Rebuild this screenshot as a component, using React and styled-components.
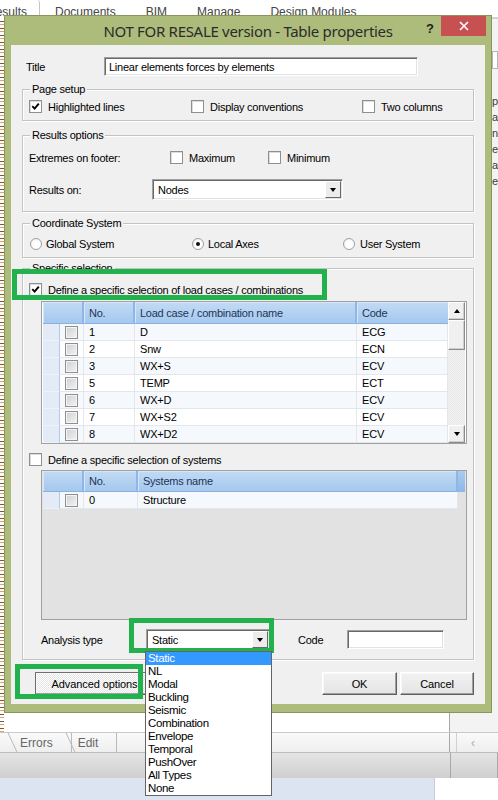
import React from 'react';
import styled, { createGlobalStyle, css } from 'styled-components';

const UI = '"Liberation Sans", Arial, sans-serif';
const SEGOE = '"Noto Sans", "Open Sans", sans-serif';

const GlobalStyle = createGlobalStyle`
  html, body { margin: 0; padding: 0; background: #fff; }
  body { font-family: ${UI}; font-size: 11px; color: #000; }
  * { box-sizing: border-box; }
`;

const Screen = styled.div`
  position: relative;
  width: 498px;
  height: 800px;
  overflow: hidden;
  background: #fff;
  display: flex;
  flex-direction: column;
`;

/* ---------- background application ---------- */

const RibbonTabs = styled.div`
  height: 18px;
  flex: none;
  display: flex;
  align-items: flex-start;
  font-family: ${UI};
  font-size: 12px;
  color: #444;
  border-bottom: 1px solid #d4d4d4;
`;

const RibbonTab = styled.div`
  padding: 5px 15px 0;
  height: 18px;
  white-space: nowrap;
  ${p => p.$active && css`
    margin-left: -13px;
    padding: 5px 12px 0 0;
    border-right: 1px solid #c6c6c6;
    border-top-right-radius: 3px;
    background: #fff;
  `}
`;

const Workspace = styled.div`
  height: 714px;
  flex: none;
  display: flex;
`;

const SideStrip = styled.div`
  width: 4px;
  flex: none;
  background: repeating-linear-gradient(180deg, #fff 0 3px, #7b5a3a 3px 4px, #fff 4px 6px, #e8a060 6px 7px);
`;

const MainPane = styled.div`
  flex: 1;
  background: #fff;
  border-right: 1px solid #a8a8a8;
`;

const RightPane = styled.div`
  width: 48px;
  flex: none;
  background: #f3f3f3;
  padding: 18px 0 0 42px;
  display: flex;
  flex-direction: column;
  gap: 4px;
  white-space: nowrap;
  color: #3a3a3a;
  border-top: 1px solid #d0d0d0;
`;

const PaneBox = styled.div`
  height: 18px;
  margin: 14px 0 22px;
  background: #fff;
  border: 1px solid #b5b5b5;
`;

const SheetTabs = styled.div`
  height: 20px;
  flex: none;
  display: flex;
  border-top: 1px solid #c9c9c9;
  background: linear-gradient(#fafafa, #eeeeee);
`;

const SheetTabArea = styled.div`
  width: 450px;
  display: flex;
  padding-left: 14px;
  border-right: 1px solid #a8a8a8;
`;

const SheetTab = styled.div`
  position: relative;
  height: 19px;
  padding: 3px 18px 0 6px;
  font-family: ${UI};
  font-size: 12px;
  color: #666;
  border-right: 1px solid #b9b9b9;
  &::before {
    content: '';
    position: absolute;
    left: -2px;
    top: 0;
    bottom: 0;
    border-left: 1px solid #b9b9b9;
    transform: skewX(25deg);
  }
`;

const ScrollStub = styled.div`
  flex: 1;
  display: flex;
  align-items: center;
  padding-left: 14px;
  color: #aaa;
  font-size: 12px;
  border-left: 1px solid #d0d0d0;
  margin-left: 6px;
`;

const StatusBar = styled.div`
  height: 26px;
  flex: none;
  background: linear-gradient(#e4e4e4, #cfcfcf);
  border-top: 1px solid #bdbdbd;
  display: flex;
`;

const StatusCell = styled.div`
  width: ${p => p.$w ? `${p.$w}px` : 'auto'};
  flex: ${p => p.$w ? 'none' : 1};
  border-right: 1px solid #a9a9a9;
`;

const BottomStrip = styled.div`
  flex: 1;
  display: flex;
`;

const BottomBlue = styled.div`
  width: 435px;
  background: #dbe4f0;
  border-right: 1px solid #c5cfdc;
`;

/* ---------- dialog window ---------- */

const Dialog = styled.div`
  position: absolute;
  left: 4px;
  top: 15px;
  width: 488px;
  height: 698px;
  background: #adbb7b;
  border: 1px solid #87955f;
  padding: 0 6px 8px;
  display: flex;
  flex-direction: column;
`;

const TitleBar = styled.div`
  height: 29px;
  flex: none;
  display: flex;
  align-items: flex-start;
  position: relative;
`;

const TitleText = styled.div`
  flex: 1;
  text-align: center;
  font-family: ${SEGOE};
  font-size: 15px;
  letter-spacing: -0.3px;
  color: #2b2b2b;
  padding-top: 5px;
`;

const HelpGlyph = styled.div`
  position: absolute;
  right: 51px;
  top: 5px;
  font-family: ${UI};
  font-weight: bold;
  font-size: 13px;
  color: #222;
`;

const CloseButton = styled.div`
  position: absolute;
  right: -1px;
  top: 0;
  width: 45px;
  height: 20px;
  background: #c75050;
  display: flex;
  align-items: center;
  justify-content: center;
`;

const Client = styled.div`
  flex: 1;
  background: #f0f0f0;
  padding: 12px 11px 0;
  display: flex;
  flex-direction: column;
`;

const Row = styled.div`
  display: flex;
  align-items: center;
  height: ${p => p.$h || 13}px;
  margin-top: ${p => p.$mt || 0}px;
  margin-left: ${p => p.$ml || 0}px;
`;

const Label = styled.span`
  width: ${p => p.$w ? `${p.$w}px` : 'auto'};
  flex: none;
  margin-left: ${p => p.$ml || 0}px;
  white-space: nowrap;
  letter-spacing: -0.25px;
`;

const TextInput = styled.div`
  width: ${p => p.$w}px;
  height: ${p => p.$h || 19}px;
  flex: none;
  background: #fff;
  border: 1px solid;
  border-color: #a0a0a0 #fff #fff #a0a0a0;
  box-shadow: inset 1px 1px 0 #696969, inset -1px -1px 0 #e3e3e3;
  padding: 2px 4px 0;
  line-height: 14px;
  letter-spacing: -0.25px;
  white-space: nowrap;
  overflow: hidden;
`;

const Group = styled.div`
  position: relative;
  margin-top: ${p => p.$mt}px;
  padding: ${p => p.$pad};
  border: 1px solid #c3c3c3;
  box-shadow: inset 1px 1px 0 #fff, 1px 1px 0 #fff;
`;

const Legend = styled.span`
  position: absolute;
  top: -7px;
  left: 7px;
  padding: 0 2px;
  background: #f0f0f0;
  letter-spacing: -0.25px;
  line-height: 13px;
`;

const OptionGrid = styled.div`
  display: grid;
  grid-template-columns: ${p => p.$cols};
  align-items: center;
  height: 13px;
`;

const Option = styled.div`
  display: flex;
  align-items: center;
  gap: ${p => p.$gap || 6}px;
  white-space: nowrap;
  letter-spacing: -0.25px;
`;

const CheckBox = styled.span`
  width: 13px;
  height: 13px;
  flex: none;
  background: #fff;
  border: 1px solid #8e8f8f;
  box-shadow: inset 1px 1px 0 #dcdcdc;
  display: inline-flex;
  align-items: center;
  justify-content: center;
`;

const GridCheck = styled.span`
  width: 13px;
  height: 13px;
  background: linear-gradient(135deg, #cfcfcf, #f4f4f4);
  border: 1px solid #8f8f8f;
  box-shadow: inset 0 0 0 1px #f4f4f4;
`;

const Radio = styled.span`
  width: 12px;
  height: 12px;
  flex: none;
  border-radius: 50%;
  background: radial-gradient(circle at 60% 60%, #fff 40%, #e6e6e6);
  border: 1px solid #a0a0a0;
  display: inline-flex;
  align-items: center;
  justify-content: center;
  &::after {
    content: '';
    width: 4px;
    height: 4px;
    border-radius: 50%;
    background: ${p => p.$on ? '#111' : 'transparent'};
  }
`;

const ComboBox = styled.div`
  width: ${p => p.$w}px;
  height: ${p => p.$h}px;
  flex: none;
  display: flex;
  align-items: center;
  background: #fff;
  border: 1px solid;
  border-color: #a0a0a0 #fff #fff #a0a0a0;
  box-shadow: inset 1px 1px 0 #696969, inset -1px -1px 0 #e3e3e3;
  padding: 0 1px 0 5px;
  letter-spacing: -0.25px;
`;

const ComboButton = styled.span`
  margin-left: auto;
  width: 16px;
  height: calc(100% - 2px);
  background: #ececec;
  border: 1px solid;
  border-color: #fff #696969 #696969 #fff;
  display: flex;
  align-items: center;
  justify-content: center;
`;

const Arrow = styled.span`
  width: 0;
  height: 0;
  border-left: 3.5px solid transparent;
  border-right: 3.5px solid transparent;
  ${p => p.$up
    ? css`border-bottom: 4px solid #000;`
    : css`border-top: 4px solid #000;`}
`;

/* ---------- grid tables ---------- */

const TableFrame = styled.div`
  width: 426px;
  height: ${p => p.$h}px;
  margin: ${p => p.$mt}px 0 0 12px;
  border: 1px solid #a0a0a0;
  padding: 0 1px;
  display: flex;
  background: ${p => p.$empty ? '#e2e2e2' : '#fff'};
  overflow: hidden;
`;

const TableBody = styled.div`
  flex: 1;
  display: flex;
  flex-direction: column;
  overflow: hidden;
`;

const GridRow = styled.div`
  display: grid;
  grid-template-columns: ${p => p.$cols};
  height: ${p => p.$h || 17}px;
  flex: none;
`;

const HeadCell = styled.div`
  grid-column: ${p => p.$span ? `span ${p.$span}` : 'auto'};
  display: flex;
  align-items: center;
  padding-left: 5px;
  color: #1d3557;
  letter-spacing: -0.25px;
  background: linear-gradient(#c2dbf4, #a5c8ee);
  border-right: 2px solid #8fb6e6;
  border-bottom: 1px solid #88b2e4;
  box-shadow: inset 1px 1px 0 #d6e6f8;
  &:last-child { border-right: none; }
`;

const HeadStub = styled.div`
  background: linear-gradient(#a9caef, #8db7e8);
`;

const RowHead = styled.div`
  background: #e3ebf6;
  border-right: 1px solid #b1c9e6;
  border-bottom: 1px solid #edf2f8;
`;

const Cell = styled.div`
  display: flex;
  align-items: center;
  justify-content: ${p => p.$center ? 'center' : 'flex-start'};
  padding-left: ${p => p.$center ? 0 : 5}px;
  background: ${p => p.$alt ? '#f5f9fd' : '#fff'};
  border-right: 1px solid #e3e6ea;
  border-bottom: 1px solid #e3e6ea;
  white-space: nowrap;
  letter-spacing: -0.2px;
`;

const ScrollBar = styled.div`
  width: 17px;
  flex: none;
  display: flex;
  flex-direction: column;
  background: repeating-conic-gradient(#f4f4f4 0 25%, #e6e6e6 0 50%) 0 0 / 2px 2px;
`;

const ScrollButton = styled.div`
  height: ${p => p.$h}px;
  flex: none;
  margin-top: ${p => p.$auto ? 'auto' : 0};
  background: #f0f0f0;
  border: 1px solid;
  border-color: #fff #8a8a8a #8a8a8a #fff;
  box-shadow: inset -1px -1px 0 #cfcfcf;
  display: flex;
  align-items: center;
  justify-content: center;
`;

/* ---------- buttons ---------- */

const ButtonRow = styled.div`
  display: flex;
  align-items: center;
  margin-top: 12px;
  height: 23px;
`;

const PushButton = styled.div`
  width: ${p => p.$w}px;
  height: 23px;
  flex: none;
  margin-left: ${p => p.$ml || 0}px;
  display: flex;
  align-items: center;
  justify-content: center;
  font-size: 11px;
  letter-spacing: -0.1px;
  border: 1px solid;
  border-color: ${p => p.$hatched ? '#6d6d6d #6d6d6d #5f5f5f #6d6d6d' : '#fff #5f5f5f #5f5f5f #fff'};
  box-shadow: inset -1px -1px 0 #a0a0a0, inset 1px 1px 0 #f8f8f8;
  background: ${p => p.$hatched
    ? 'repeating-conic-gradient(#ffffff 0 25%, #e4e4e4 0 50%) 0 0 / 2px 2px'
    : 'linear-gradient(#f2f2f2, #e4e4e4)'};
`;

/* ---------- overlays ---------- */

const Highlight = styled.div`
  position: absolute;
  left: ${p => p.$x}px;
  top: ${p => p.$y}px;
  width: ${p => p.$w}px;
  height: ${p => p.$h}px;
  border: 5px solid #22b14c;
  pointer-events: none;
`;

const DropList = styled.ul`
  position: absolute;
  left: 145px;
  top: 651px;
  width: 127px;
  margin: 0;
  padding: 0;
  list-style: none;
  background: #fff;
  border: 1px solid #646464;
`;

const DropItem = styled.li`
  height: 13px;
  line-height: 13px;
  padding-left: 2px;
  font-size: 11.5px;
  letter-spacing: -0.35px;
  color: ${p => p.$selected ? '#fff' : '#000'};
  background: ${p => p.$selected ? '#3399ff' : 'transparent'};
`;

/* ---------- data ---------- */

const loadCases = [
  ['1', 'D', 'ECG'],
  ['2', 'Snw', 'ECN'],
  ['3', 'WX+S', 'ECV'],
  ['5', 'TEMP', 'ECT'],
  ['6', 'WX+D', 'ECV'],
  ['7', 'WX+S2', 'ECV'],
  ['8', 'WX+D2', 'ECV'],
];

const analysisTypes = ['Static', 'NL', 'Modal', 'Buckling', 'Seismic', 'Combination',
  'Envelope', 'Temporal', 'PushOver', 'All Types', 'None'];

const LOAD_COLS = '17px 24px 51px 222px 91px';
const SYS_COLS = '17px 24px 54px 320px';

function Check({ checked }) {
  return (
    <CheckBox>
      {checked && (
        <svg width="9" height="9" viewBox="0 0 9 9">
          <path d="M1.3 4.2 L3.6 6.6 L7.8 1.6" stroke="#000" strokeWidth="1.9" fill="none" />
        </svg>
      )}
    </CheckBox>
  );
}

function Combo({ w, h, value }) {
  return (
    <ComboBox $w={w} $h={h}>
      {value}
      <ComboButton><Arrow /></ComboButton>
    </ComboBox>
  );
}

function LoadCaseTable() {
  return (
    <TableFrame $h={143} $mt={5}>
      <TableBody>
        <GridRow $cols={LOAD_COLS} $h={22}>
          <HeadCell $span={2} />
          <HeadCell>No.</HeadCell>
          <HeadCell>Load case / combination name</HeadCell>
          <HeadCell>Code</HeadCell>
        </GridRow>
        {loadCases.map(([no, name, code], i) => (
          <GridRow key={no} $cols={LOAD_COLS}>
            <RowHead />
            <Cell $center $alt={i % 2 === 0}><GridCheck /></Cell>
            <Cell $alt={i % 2 === 0}>{no}</Cell>
            <Cell $alt={i % 2 === 0}>{name}</Cell>
            <Cell $alt={i % 2 === 0}>{code}</Cell>
          </GridRow>
        ))}
      </TableBody>
      <ScrollBar>
        <ScrollButton $h={18}><Arrow $up /></ScrollButton>
        <ScrollButton $h={30} />
        <ScrollButton $h={18} $auto><Arrow /></ScrollButton>
      </ScrollBar>
    </TableFrame>
  );
}

function SystemsTable() {
  return (
    <TableFrame $h={150} $mt={4} $empty>
      <TableBody>
        <GridRow $cols={`${SYS_COLS} 1fr`} $h={21}>
          <HeadCell $span={2} />
          <HeadCell>No.</HeadCell>
          <HeadCell>Systems name</HeadCell>
          <HeadStub />
        </GridRow>
        <GridRow $cols={SYS_COLS}>
          <RowHead />
          <Cell $center $alt><GridCheck /></Cell>
          <Cell $alt>0</Cell>
          <Cell $alt>Structure</Cell>
        </GridRow>
      </TableBody>
    </TableFrame>
  );
}

export default function App() {
  return (
    <>
      <GlobalStyle />
      <Screen>
        <RibbonTabs>
          <RibbonTab $active>Results</RibbonTab>
          <RibbonTab>Documents</RibbonTab>
          <RibbonTab>BIM</RibbonTab>
          <RibbonTab>Manage</RibbonTab>
          <RibbonTab>Design Modules</RibbonTab>
        </RibbonTabs>

        <Workspace>
          <SideStrip />
          <MainPane />
          <RightPane>
            <PaneBox />
            <span>pour</span>
            <span>alpha</span>
            <span>noeud</span>
            <span>effort</span>
            <span>axe</span>
            <span>effort</span>
          </RightPane>
        </Workspace>

        <SheetTabs>
          <SheetTabArea>
            <SheetTab>Errors</SheetTab>
            <SheetTab>Edit</SheetTab>
          </SheetTabArea>
          <ScrollStub>&lsaquo;</ScrollStub>
        </SheetTabs>
        <StatusBar>
          <StatusCell $w={451} />
          <StatusCell />
        </StatusBar>
        <BottomStrip>
          <BottomBlue />
        </BottomStrip>

        <Dialog>
          <TitleBar>
            <TitleText>NOT FOR RESALE version - Table properties</TitleText>
            <HelpGlyph>?</HelpGlyph>
            <CloseButton>
              <svg width="10" height="10" viewBox="0 0 10 10">
                <path d="M1 1 L9 9 M9 1 L1 9" stroke="#fff" strokeWidth="1.6" />
              </svg>
            </CloseButton>
          </TitleBar>

          <Client>
            <Row $h={19}>
              <Label $w={78} $ml={4}>Title</Label>
              <TextInput $w={314}>Linear elements forces by elements</TextInput>
            </Row>

            <Group $mt={13} $pad="10px 6px 7px">
              <Legend>Page setup</Legend>
              <OptionGrid $cols="162px 171px 1fr">
                <Option><Check checked />Highlighted lines</Option>
                <Option><Check />Display conventions</Option>
                <Option><Check />Two columns</Option>
              </OptionGrid>
            </Group>

            <Group $mt={14} $pad="15px 6px 11px">
              <Legend>Results options</Legend>
              <OptionGrid $cols="141px 98px 1fr">
                <Label>Extremes on footer:</Label>
                <Option><Check />Maximum</Option>
                <Option><Check />Minimum</Option>
              </OptionGrid>
              <Row $h={21} $mt={15}>
                <Label $w={123}>Results on:</Label>
                <Combo w={191} h={21} value="Nodes" />
              </Row>
            </Group>

            <Group $mt={11} $pad="13px 7px 7px">
              <Legend>Coordinate System</Legend>
              <OptionGrid $cols="162px 151px 1fr">
                <Option $gap={4}><Radio />Global System</Option>
                <Option $gap={4}><Radio $on />Local Axes</Option>
                <Option $gap={5}><Radio />User System</Option>
              </OptionGrid>
            </Group>

            <Group $mt={10} $pad="14px 6px 9px">
              <Legend>Specific selection</Legend>
              <Row>
                <Option><Check checked />Define a specific selection of load cases / combinations</Option>
              </Row>
              <LoadCaseTable />
              <Row $mt={9}>
                <Option><Check />Define a specific selection of systems</Option>
              </Row>
              <SystemsTable />
              <Row $h={21} $mt={9} $ml={12}>
                <Label $w={105}>Analysis type</Label>
                <Combo w={124} h={21} value="Static" />
                <Label $w={49} $ml={28}>Code</Label>
                <TextInput $w={97}></TextInput>
              </Row>
            </Group>

            <ButtonRow>
              <PushButton $w={119} $ml={13} $hatched>Advanced options</PushButton>
              <PushButton $w={75} $ml={168}>OK</PushButton>
              <PushButton $w={74} $ml={3}>Cancel</PushButton>
            </ButtonRow>
          </Client>
        </Dialog>

        <Highlight $x={12} $y={269} $w={315} $h={31} />
        <Highlight $x={129} $y={618} $w={145} $h={35} />
        <Highlight $x={15} $y={664} $w={128} $h={35} />

        <DropList>
          {analysisTypes.map((t, i) => (
            <DropItem key={t} $selected={i === 0}>{t}</DropItem>
          ))}
        </DropList>
      </Screen>
    </>
  );
}
